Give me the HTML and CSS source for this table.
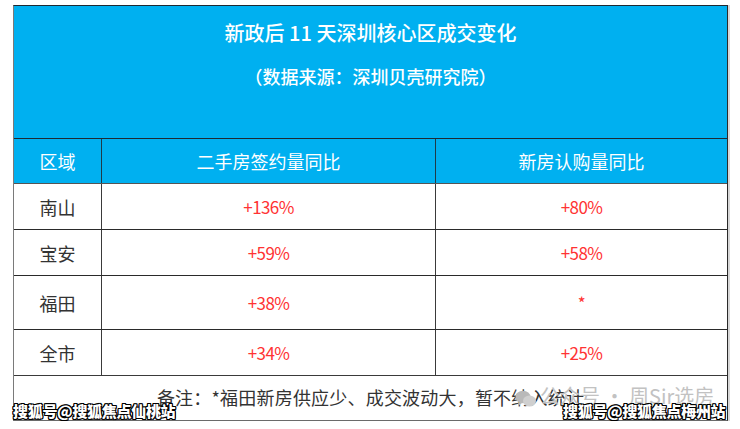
FILE: index.html
```html
<!DOCTYPE html>
<html lang="zh">
<head>
<meta charset="utf-8">
<link rel="stylesheet" href="styles.css">
</head>
<body>
<div class="page">
  <div class="sheet">
    <div class="head">
      <div class="title">新政后 11 天深圳核心区成交变化</div>
      <div class="subtitle">（数据来源：深圳贝壳研究院）</div>
    </div>
    <div class="row row-head">
      <div class="cell c1">区域</div>
      <div class="cell c2">二手房签约量同比</div>
      <div class="cell c3">新房认购量同比</div>
    </div>
    <div class="row">
      <div class="cell c1 name">南山</div>
      <div class="cell c2 num">+136%</div>
      <div class="cell c3 num">+80%</div>
    </div>
    <div class="row">
      <div class="cell c1 name">宝安</div>
      <div class="cell c2 num">+59%</div>
      <div class="cell c3 num">+58%</div>
    </div>
    <div class="row row-tall">
      <div class="cell c1 name">福田</div>
      <div class="cell c2 num">+38%</div>
      <div class="cell c3 num">*</div>
    </div>
    <div class="row">
      <div class="cell c1 name">全市</div>
      <div class="cell c2 num">+34%</div>
      <div class="cell c3 num">+25%</div>
    </div>
    <div class="note">备注：*福田新房供应少、成交波动大，暂不纳入统计</div>
  </div>
  <div class="wm-faint">
    <svg class="wm-icon" width="22" height="18" viewBox="0 0 22 18">
      <ellipse cx="8" cy="7" rx="7.5" ry="6.3" fill="#b9b9b9"/>
      <ellipse cx="14.5" cy="11" rx="6.5" ry="5.5" fill="#cfcfcf"/>
      <path d="M4 12 L3 16 L7 13 Z" fill="#b9b9b9"/>
    </svg>
    <span>公众号 · 周Sir选房</span>
  </div>
  <div class="wm wm-left">搜狐号@搜狐焦点仙桃站</div>
  <div class="wm wm-right">搜狐号@搜狐焦点梅州站</div>
</div>
</body>
</html>
```

FILE: styles.css
```css
html, body {
  margin: 0;
  padding: 0;
  background: #ffffff;
}
body {
  font-family: "Noto Sans CJK SC", "Noto Sans", sans-serif;
}
.page {
  position: relative;
  width: 740px;
  height: 429px;
  overflow: hidden;
  padding: 5px 0 0 13px;
  box-sizing: border-box;
}
.sheet {
  width: 715px;
  box-sizing: border-box;
  border-top: 1px solid #1e2a33;
  border-left: 1px solid #7a7a7a;
  border-right: 1px solid #2a2a2a;
  border-bottom: 1px solid #6a6a6a;
  box-shadow: 2px 0 0 #d8d8d8;
}
.head {
  height: 132px;
  background: #00b0f0;
  color: #ffffff;
  display: flex;
  flex-direction: column;
  align-items: center;
  box-sizing: border-box;
  padding-top: 13px;
}
.title {
  font-size: 20px;
  line-height: 28px;
  font-weight: 500;
}
.subtitle {
  font-size: 18px;
  line-height: 24px;
  margin-top: 17px;
  font-weight: 500;
}
.row {
  display: grid;
  grid-template-columns: 88px 334px 1fr;
  height: 46px;
  border-top: 1px solid #2a2a2a;
  box-sizing: border-box;
}
.row-head {
  height: 45px;
  background: #00b0f0;
  color: #ffffff;
  border-top-color: #1e2a33;
  font-size: 18px;
}
.row-head + .row {
  border-top-color: #555555;
}
.row-tall {
  height: 54px;
}
.cell {
  display: flex;
  align-items: center;
  justify-content: center;
  box-sizing: border-box;
}
.c1, .c2 {
  border-right: 1px solid #3a3a3a;
}
.row-head .c1, .row-head .c2 {
  border-right-color: #1e3a48;
}
.name {
  color: #333333;
  font-size: 18px;
}
.num {
  color: #ff3333;
  font-size: 17px;
  letter-spacing: -0.6px;
}
.note {
  height: 45px;
  border-top: 1px solid #3a3a3a;
  box-sizing: border-box;
  display: flex;
  justify-content: center;
  padding-top: 8px;
  color: #333333;
  font-size: 18px;
  line-height: 26px;
  letter-spacing: 0.2px;
}
.wm-faint {
  position: absolute;
  left: 515px;
  top: 382px;
  display: flex;
  align-items: center;
  gap: 3px;
  color: #c2c2c2;
  font-size: 20px;
  line-height: 28px;
}
.wm-icon {
  margin-top: 6px;
}
.wm {
  position: absolute;
  top: 400px;
  color: #ffffff;
  font-size: 15px;
  font-weight: 900;
  line-height: 22px;
  letter-spacing: -0.3px;
  text-shadow: 1px 0 0 #000, -1px 0 0 #000, 0 1px 0 #000, 0 -1px 0 #000, 1px 1px 0 #000, -1px -1px 0 #000, 1px -1px 0 #000, -1px 1px 0 #000;
}
.wm-left {
  left: 13px;
}
.wm-right {
  left: 563px;
}
```
